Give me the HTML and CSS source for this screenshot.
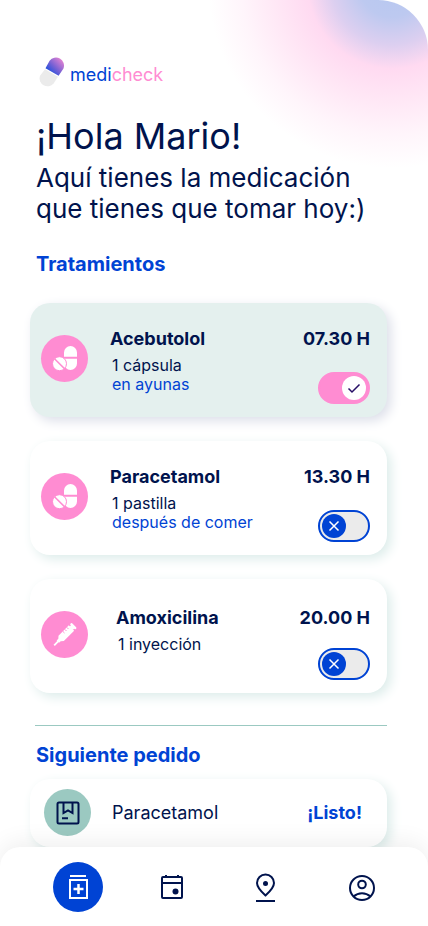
FILE: index.html
```html
<!DOCTYPE html>
<html lang="es">
<head>
<meta charset="utf-8">
<meta name="viewport" content="width=device-width, initial-scale=1">
<title>medicheck</title>
<link rel="stylesheet" href="styles.css">
</head>
<body>
<div class="app">
  <header class="hero">
    <a class="brand" href="#">
      <svg class="brand-mark" viewBox="0 0 26 32" aria-hidden="true">
        <defs>
          <linearGradient id="pill" x1="0" y1="1" x2="1" y2="0">
            <stop offset="0.2" stop-color="#2350dc"/>
            <stop offset="0.5" stop-color="#7a62d4"/>
            <stop offset="1" stop-color="#ff8cd2"/>
          </linearGradient>
        </defs>
        <path fill="url(#pill)" d="M6.500 12.300 10.600 4.800A8 8 0 0 1 24.500 12.400L19.600 19.800Z"/>
        <path fill="#ebebeb" d="M6 13.200 19 20.700 14.600 27.600A8 8 0 0 1 1 19.800Z"/>
      </svg>
      <span class="brand-name">medi<span class="brand-accent">check</span></span>
    </a>
    <h1 class="greeting">¡Hola Mario!</h1>
    <p class="intro">Aquí tienes la medicación<br>que tienes que tomar hoy:)</p>
  </header>

  <main class="content">
    <section>
      <h2 class="section-title">Tratamientos</h2>
      <ul class="treatments">
        <li class="card card-taken">
          <span class="badge">
            <svg viewBox="0 0 47 47" aria-hidden="true"><use href="#pills"/></svg>
          </span>
          <div class="details">
            <h3 class="name">Acebutolol</h3>
            <p class="dose">1 cápsula</p>
            <p class="dose note">en ayunas</p>
          </div>
          <div class="schedule">
            <time class="hour" datetime="07:30">07.30 H</time>
            <label class="toggle">
              <input type="checkbox" aria-label="Acebutolol tomado" checked>
              <svg class="mark mark-on" viewBox="0 0 24 24" aria-hidden="true"><path d="m6.500 12.500 3.500 3.500L17.500 8.500"/></svg>
              <svg class="mark mark-off" viewBox="0 0 24 24" aria-hidden="true"><path d="m7.500 7.500 9 9m0-9-9 9"/></svg>
            </label>
          </div>
        </li>
        <li class="card">
          <span class="badge">
            <svg viewBox="0 0 47 47" aria-hidden="true"><use href="#pills"/></svg>
          </span>
          <div class="details">
            <h3 class="name">Paracetamol</h3>
            <p class="dose">1 pastilla</p>
            <p class="dose note">después de comer</p>
          </div>
          <div class="schedule">
            <time class="hour" datetime="13:30">13.30 H</time>
            <label class="toggle">
              <input type="checkbox" aria-label="Paracetamol tomado">
              <svg class="mark mark-on" viewBox="0 0 24 24" aria-hidden="true"><path d="m6.500 12.500 3.500 3.500L17.500 8.500"/></svg>
              <svg class="mark mark-off" viewBox="0 0 24 24" aria-hidden="true"><path d="m7.500 7.500 9 9m0-9-9 9"/></svg>
            </label>
          </div>
        </li>
        <li class="card card-short">
          <span class="badge">
            <svg viewBox="0 0 47 47" aria-hidden="true">
              <g transform="translate(23.500 24) rotate(45) scale(.94)" fill="#fff">
                <rect x="-4" y="-14.500" width="8" height="2.500" rx="1"/>
                <rect x="-2.500" y="-13" width="5" height="3"/>
                <path d="M-4-10.500H4V5L1.800 7.500V10H1v5.500h-2V10h-.8V7.500L-4 5Z"/>
                <path d="M-4-7.500h2.500M-4-4.500h2.500M-4-1.500h2.500" stroke="#ff8cd2" stroke-width="1"/>
              </g>
            </svg>
          </span>
          <div class="details">
            <h3 class="name">Amoxicilina</h3>
            <p class="dose">1 inyección</p>
          </div>
          <div class="schedule">
            <time class="hour" datetime="20:00">20.00 H</time>
            <label class="toggle">
              <input type="checkbox" aria-label="Amoxicilina tomada">
              <svg class="mark mark-on" viewBox="0 0 24 24" aria-hidden="true"><path d="m6.500 12.500 3.500 3.500L17.500 8.500"/></svg>
              <svg class="mark mark-off" viewBox="0 0 24 24" aria-hidden="true"><path d="m7.500 7.500 9 9m0-9-9 9"/></svg>
            </label>
          </div>
        </li>
      </ul>
    </section>

    <section class="orders">
      <h2 class="section-title">Siguiente pedido</h2>
      <div class="card card-order">
        <span class="badge badge-green">
          <svg viewBox="0 0 47 47" aria-hidden="true" fill="none" stroke="#00134d" stroke-width="2">
            <rect x="13.500" y="13.500" width="21" height="21" rx="1.500"/>
            <path d="M19.500 14v10l4.500-2.500 4.500 2.500V14M18 29.200h6"/>
          </svg>
        </span>
        <p class="order-name">Paracetamol</p>
        <p class="order-status">¡Listo!</p>
      </div>
    </section>
  </main>

  <nav class="tabs" aria-label="Principal">
    <a class="tab tab-current" href="#" aria-label="Medicación" aria-current="page">
      <svg viewBox="0 0 32 32" aria-hidden="true" fill="none" stroke="#fff" stroke-width="2">
        <path d="M8 5h16"/><path d="M8 9h17v18H8Z"/><path stroke-width="2.500" d="M16.500 13v10M11.500 18h10"/>
      </svg>
    </a>
    <a class="tab" href="#" aria-label="Calendario">
      <svg viewBox="0 0 32 32" aria-hidden="true" fill="none" stroke="#00134d" stroke-width="2">
        <rect x="5" y="6" width="20" height="21" rx="1"/><path d="M5 12h20M9 4v2M21 4v2"/><circle cx="18.500" cy="20.500" r="3" fill="#00134d" stroke="none"/>
      </svg>
    </a>
    <a class="tab" href="#" aria-label="Farmacias">
      <svg viewBox="0 0 32 32" aria-hidden="true" fill="none" stroke="#00134d" stroke-width="2">
        <path d="M14.500 24.500c-5-4.500-8.500-8.500-8.500-12.500a8.500 8.500 0 0 1 17 0c0 4-3.500 8-8.500 12.500ZM5 30h19"/><circle cx="14.500" cy="12.500" r="2.500" fill="#00134d" stroke="none"/>
      </svg>
    </a>
    <a class="tab" href="#" aria-label="Perfil">
      <svg viewBox="0 0 32 32" aria-hidden="true" fill="none" stroke="#00134d" stroke-width="2">
        <circle cx="16" cy="17" r="12"/><circle cx="16" cy="13.500" r="3.800"/><path d="M7.500 25.500c5-4.500 12-4.500 17 0"/>
      </svg>
    </a>
  </nav>
</div>

<svg class="symbols" aria-hidden="true">
  <symbol id="pills" viewBox="0 0 47 47">
    <path fill="#fff" d="M23 21.800v-4.300a6.500 6.500 0 0 1 13 0v4.300ZM23 23.800h13v4.700a6.500 6.500 0 0 1-13 0Z"/>
    <circle cx="18.500" cy="28.700" r="7" fill="#fff" stroke="#ff8cd2"/>
    <path d="m13.500 23.700 10.200 10.200" stroke="#ff8cd2" stroke-width="1.500"/>
  </symbol>
</svg>
</body>
</html>
```

FILE: styles.css
```css
:root {
  --navy: #00134d;
  --blue: #0043d4;
  --pink: #ff8cd2;
  --green: #9bc9c1;
  --mint: #e4f0ee;
}

* {
  box-sizing: border-box;
  margin: 0;
  padding: 0;
}

body {
  background: #fff;
  color: var(--navy);
  font-family: Inter, "Liberation Sans", sans-serif;
  font-optical-sizing: none;
}

svg {
  display: block;
}

a {
  color: inherit;
  text-decoration: none;
}

ul {
  list-style: none;
}

.symbols {
  position: absolute;
  width: 0;
  height: 0;
}

.app {
  display: flex;
  flex-direction: column;
  min-height: 100vh;
}

.hero {
  padding: 56px 36px 0;
  border-top-right-radius: 50px;
  background: radial-gradient(circle 184px at calc(100% - 36px) -16px, #b6c8f0 0, #bdc9f0 18%, #dccff0 33%, #ffdaf1 46%, #ffe6f5 62%, #fff5fb 82%, #fff 100%);
}

.brand {
  display: flex;
  align-items: center;
  gap: 5px;
}

.brand-mark {
  width: 26px;
  height: 32px;
  margin-left: 3px;
}

.brand-name {
  padding-top: 6px;
  color: var(--blue);
  font-size: 18px;
  line-height: 22px;
}

.brand-accent {
  color: var(--pink);
}

.greeting {
  margin-top: 26px;
  font-size: 36px;
  font-weight: 400;
  line-height: 44px;
}

.intro {
  margin-top: 4px;
  font-size: 26px;
  line-height: 31px;
}

.content {
  flex: 1;
  padding: 28px 41px 0 30px;
}

.section-title {
  padding-left: 6px;
  color: var(--blue);
  font-size: 20px;
  font-weight: 700;
  line-height: 24px;
}

.treatments {
  display: grid;
  gap: 24px;
  margin-top: 27px;
}

.card {
  display: flex;
  align-items: center;
  gap: 22px;
  min-height: 114px;
  padding: 0 17px 0 11px;
  border-radius: 20px;
  background: #fff;
  box-shadow: 4px 4px 12px #dcecea;
}

.card-taken {
  background: var(--mint);
  box-shadow: 4px 4px 12px #dcdfe9;
}

.card-short {
  gap: 28px;
}

.badge {
  flex: none;
  width: 47px;
  height: 47px;
  margin-bottom: 4px;
  border-radius: 50%;
  background: var(--pink);
}

.badge-green {
  margin-bottom: 2px;
  background: var(--green);
}

.details {
  flex: 1;
  align-self: flex-start;
  padding-top: 25px;
}

.name,
.hour {
  font-size: 18px;
  font-weight: 700;
  line-height: 22px;
}

.name {
  margin-bottom: 6px;
}

.dose {
  padding-left: 2px;
  font-size: 16px;
  line-height: 19px;
}

.note {
  color: var(--blue);
}

.schedule {
  display: flex;
  flex-direction: column;
  align-items: flex-end;
  justify-content: space-between;
  align-self: stretch;
  padding: 25px 0 13px;
}

.card-short .details,
.card-short .schedule {
  padding-top: 28px;
}

.toggle {
  display: grid;
  align-items: center;
  cursor: pointer;
}

.toggle input,
.mark {
  grid-area: 1 / 1;
}

.toggle input {
  width: 52px;
  height: 32px;
  appearance: none;
  border: 2px solid var(--blue);
  border-radius: 16px;
  background: #ebebeb;
}

.mark {
  width: 24px;
  height: 24px;
  margin: 0 4px;
  border-radius: 50%;
  background: var(--blue);
  fill: none;
  stroke: #fff;
  stroke-width: 1.5;
}

.mark-on {
  display: none;
  justify-self: end;
  background: #fff;
  stroke: #260e66;
}

.toggle input:checked {
  border-color: var(--pink);
  background: var(--pink);
}

.toggle input:checked ~ .mark-on {
  display: block;
}

.toggle input:checked ~ .mark-off {
  display: none;
}

.orders {
  margin-top: 32px;
}

.orders::before {
  content: "";
  display: block;
  margin: 0 0 17px 5px;
  border-top: 1px solid var(--green);
}

.card-order {
  gap: 21px;
  min-height: 68px;
  margin-top: 12px;
  padding: 0 25px 0 14px;
}

.order-name,
.order-status {
  font-size: 18px;
  line-height: 22px;
}

.order-name {
  flex: 1;
}

.order-status {
  color: var(--blue);
  font-weight: 700;
}

.tabs {
  position: sticky;
  bottom: 0;
  display: flex;
  justify-content: space-between;
  padding: 15px 41px 14px 53px;
  border-radius: 20px 20px 0 0;
  background: #fff;
  box-shadow: 0 -4px 24px rgba(0, 0, 0, 0.07);
}

.tab {
  display: grid;
  place-items: center;
  width: 50px;
  height: 50px;
  border-radius: 50%;
}

.tab svg {
  width: 32px;
  height: 32px;
}

.tab-current {
  background: var(--blue);
}
```
